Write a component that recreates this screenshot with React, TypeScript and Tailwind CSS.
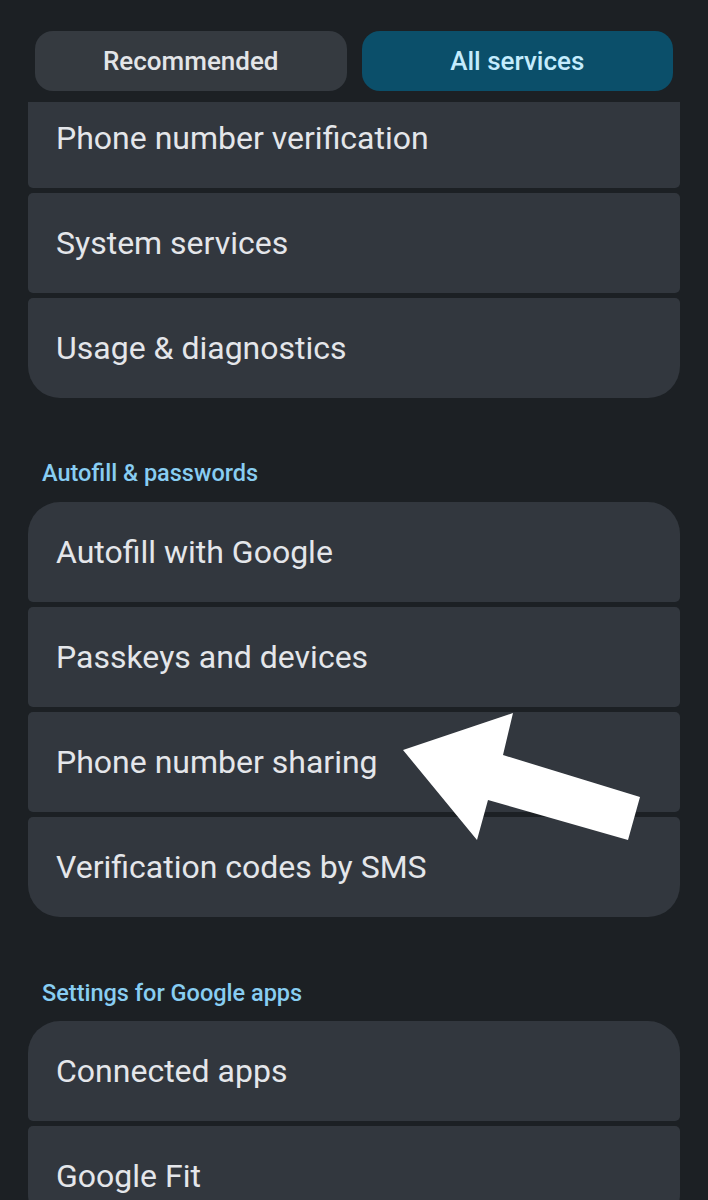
import React from 'react';

type Group = { title?: string; items: string[]; clipTop?: boolean };

const groups: Group[] = [
    { items: ['Phone number verification', 'System services', 'Usage & diagnostics'], clipTop: true },
    { title: 'Autofill & passwords', items: ['Autofill with Google', 'Passkeys and devices', 'Phone number sharing', 'Verification codes by SMS'] },
    { title: 'Settings for Google apps', items: ['Connected apps', 'Google Fit'] },
];

const Row = ({ label, first, last, clipped }: { label: string; first: boolean; last: boolean; clipped?: boolean }) => {
    const corners = `${first && !clipped ? 'rounded-t-[32px]' : 'rounded-t-[5px]'} ${last ? 'rounded-b-[32px]' : 'rounded-b-[5px]'}`;
    return (
        <div
            className={`flex items-center bg-[#32373e] px-[28px] ${clipped ? 'h-[86px] pb-[14px] rounded-t-none' : 'h-[100px]'} ${corners}`}
        >
            <span className="text-[32px] text-[#e4e6ea] leading-none">{label}</span>
        </div>
    );
};

export default function App() {
    return (
        <div
            className="relative w-[708px] h-[1200px] overflow-hidden bg-[#1c2024]"
            style={{ fontFamily: 'Roboto, "Liberation Sans", sans-serif' }}
        >
            {/* Tabs */}
            <div className="flex gap-[15px] px-[35px] pt-[31px]">
                <div className="flex-1 h-[60px] rounded-[18px] bg-[#353a40] flex items-center justify-center">
                    <span className="text-[26px] font-medium text-[#e3e5e8]">Recommended</span>
                </div>
                <div className="flex-1 h-[60px] rounded-[18px] bg-[#0b4f6a] flex items-center justify-center">
                    <span className="text-[26px] font-medium text-[#c4ecfd]">All services</span>
                </div>
            </div>

            {/* Lists */}
            <div className="px-[28px] pt-[11px]">
                {groups.map((g, gi) => (
                    <div key={gi}>
                        {g.title && (
                            <div className={`${gi === 1 ? 'pt-[61px] pb-[15px]' : 'pt-[62px] pb-[14px]'} px-[14px]`}>
                                <div className="text-[23.5px] leading-[28px] font-medium text-[#88cdf2]">{g.title}</div>
                            </div>
                        )}
                        <div className="flex flex-col gap-[5px]">
                            {g.items.map((item, i) => (
                                <Row
                                    key={item}
                                    label={item}
                                    first={i === 0}
                                    last={i === g.items.length - 1}
                                    clipped={g.clipTop && i === 0}
                                />
                            ))}
                        </div>
                    </div>
                ))}
            </div>

            {/* Annotation arrow */}
            <svg className="absolute left-0 top-0 pointer-events-none" width="708" height="1200" viewBox="0 0 708 1200">
                <polygon points="403,750 513,713 503,755 640,797 628,840 488,800 477,840" fill="#ffffff" />
            </svg>
        </div>
    );
}
